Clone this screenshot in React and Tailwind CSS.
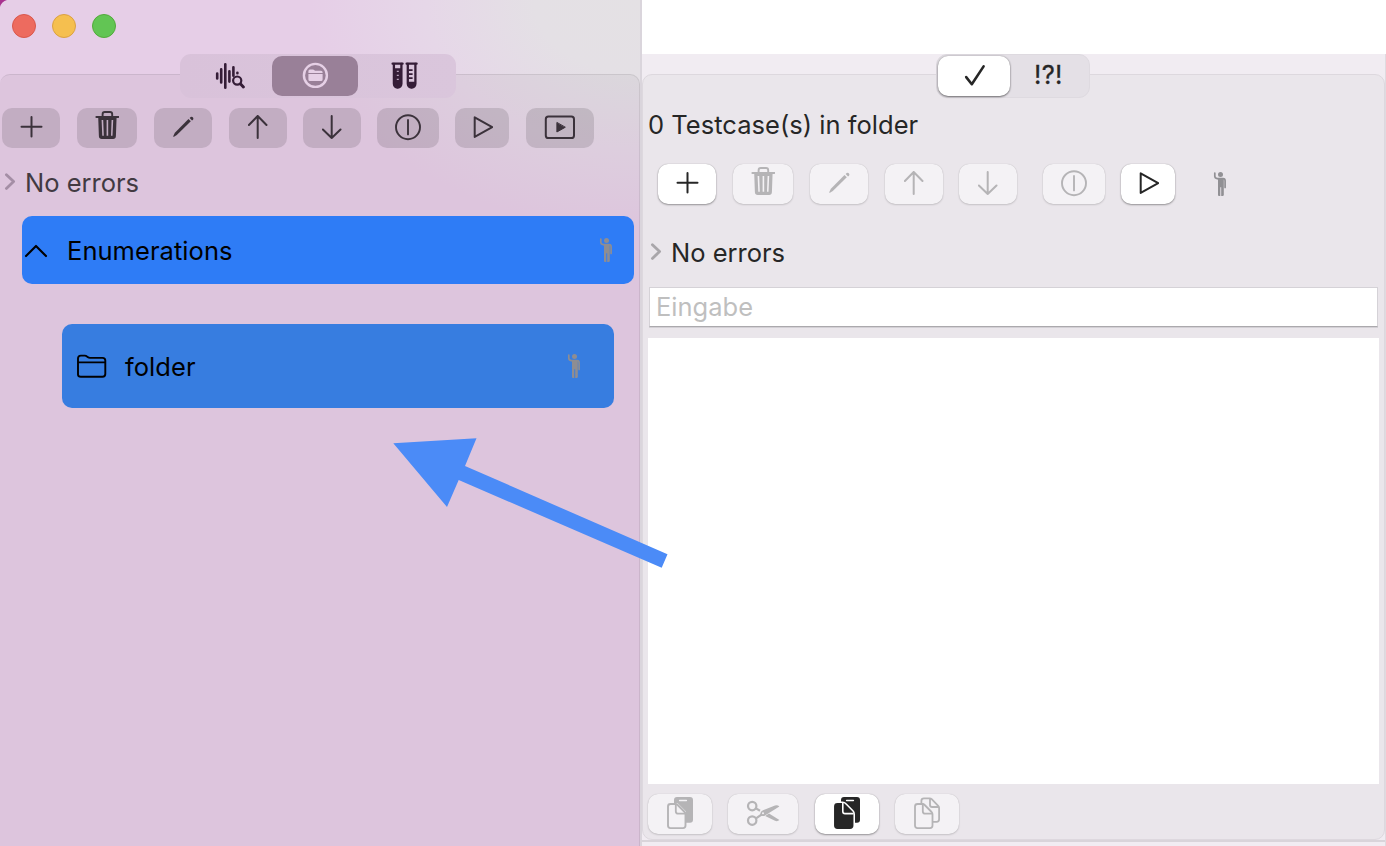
import React from "react";

const stroke = { fill: "none", stroke: "currentColor", strokeLinecap: "round", strokeLinejoin: "round" };

function Plus() {
  return (
    <svg width="24" height="40" viewBox="-0.5 0 24 40" {...stroke} strokeWidth="2">
      <path d="M2 18.7H22M12 8.9V28.5" />
    </svg>
  );
}

function Trash() {
  return (
    <svg width="24" height="40" viewBox="-0.4 0 24 40" fill="none">
      <path d="M7.2 8.5V6.2Q7.2 4 9.4 4H14.6Q16.8 4 16.8 6.2V8.5" stroke="currentColor" strokeWidth="1.9" />
      <path d="M1 8.9H23" stroke="currentColor" strokeWidth="2" strokeLinecap="round" />
      <path
        fill="currentColor"
        fillRule="evenodd"
        d="M2.8 9H21.2L20.5 28.3Q20.3 31 17.7 31H6.3Q3.7 31 3.5 28.3ZM6.2 12L6.9 27.8H8.4L7.8 12ZM11.2 12V27.8H12.8V12ZM16.2 12L15.6 27.8H17.1L17.8 12Z"
      />
    </svg>
  );
}

function Pencil() {
  return (
    <svg width="22" height="40" viewBox="-0.4 0 22 40" fill="currentColor">
      <path d="M16.1 11L18.4 13.3L4.4 27.1L1.6 28.8Q.5 29 .9 27.9L2.5 24.8Z" />
      <path d="M17.3 10.1L18.3 9.1Q19.5 8.3 20.6 9.4Q21.5 10.6 20.6 11.7L19.6 12.6Z" />
    </svg>
  );
}

function ArrowUp() {
  return (
    <svg width="20" height="40" viewBox="0.3 0 20 40" {...stroke} strokeWidth="2">
      <path d="M10 30V8M1.2 17L10 8L18.8 17" />
    </svg>
  );
}

function ArrowDown() {
  return (
    <svg width="20" height="40" viewBox="0.3 0 20 40" {...stroke} strokeWidth="2">
      <path d="M10 8V30M1.2 21.5L10 30L18.8 21.5" />
    </svg>
  );
}

function CircleBar() {
  return (
    <svg width="28" height="40" viewBox="0 0 28 40" {...stroke} strokeWidth="1.9">
      <circle cx="14" cy="19.2" r="12" />
      <path d="M14 12V26.4" />
    </svg>
  );
}

function Play() {
  return (
    <svg width="22" height="40" viewBox="-1 0 22 40" {...stroke} strokeWidth="2">
      <path d="M2.7 9.3V28.9L20.2 19.2Z" />
    </svg>
  );
}

function PlayRect() {
  return (
    <svg width="32" height="40" viewBox="0 0 32 40" {...stroke} strokeWidth="2">
      <rect x="1.8" y="8.6" width="28.2" height="21.4" rx="2.6" />
      <path d="M12.9 14.8V24L21 19.4Z" fill="currentColor" strokeWidth="1" />
    </svg>
  );
}

function Person({ className = "" }) {
  return (
    <svg width="14" height="26" viewBox="0 0 14 26" className={className}>
      <circle cx="7.5" cy="3.4" r="2.5" fill="currentColor" />
      <path d="M1.8 2V5.2Q1.9 7.3 4.3 7.6H10.2Q12.1 7.7 12.1 9.8V16.4" fill="none" stroke="currentColor" strokeWidth="1.7" strokeLinecap="round" />
      <path d="M4.5 6.9H10.8V24Q10.7 25 9.6 25H8.2V16.3H7.3V25H6Q5 25 5 24V9Z" fill="currentColor" />
    </svg>
  );
}

function Chevron({ className = "" }) {
  return (
    <svg width="12" height="18" viewBox="-0.4 0.4 12 18" {...stroke} strokeWidth="2.8" className={className}>
      <path d="M2 2.2L9.2 9L2 15.8" />
    </svg>
  );
}

function WaveSearch() {
  return (
    <svg width="30" height="30" viewBox="0 0.6 30 30" {...stroke} strokeWidth="2.2">
      <path d="M2.2 13.2V18M6.2 9V22M10.3 3.8V27.4M14.4 10.8V21.2M18.4 6.8V15.4M22.4 12.4V12.8" strokeWidth="2.6" />
      <circle cx="22.2" cy="20.2" r="4.1" />
      <path d="M25.6 23.6L28.4 26.6" strokeWidth="2.9" />
    </svg>
  );
}

function FolderCircle() {
  return (
    <svg width="28" height="28" viewBox="-0.4 0.6 28 28">
      <circle cx="14" cy="14" r="11.5" fill="none" stroke="#e6d0e6" strokeWidth="2.4" />
      <path d="M7 11.5V9.8Q7 8.2 8.6 8.2H11.5Q12.3 8.2 12.8 8.7L13.5 9.3H19.6Q21.2 9.3 21.2 10.8V11.5ZM7 12.5H21.2V18Q21.2 19.6 19.6 19.6H8.6Q7 19.6 7 18Z" fill="#e6d0e6" />
    </svg>
  );
}

function Tubes() {
  return (
    <svg width="28" height="28" viewBox="0.4 0.7 28 28">
      <g fill="none" stroke="currentColor" strokeLinecap="round">
        <path d="M2 2.4H12M16 2.4H26" strokeWidth="2.3" />
        <path d="M3.3 2.5V22.5Q3.5 26 7 26.2Q10.6 26 10.8 22.5V2.5M17.2 2.5V22.5Q17.4 26 21 26.2Q24.6 26 24.8 22.5V2.5" strokeWidth="2.3" />
      </g>
      <path d="M3 7H11V23Q10.6 26.7 7 27Q3.4 26.7 3 23ZM17 20.5H25V23Q24.6 26.7 21 27Q17.4 26.7 17 23Z" fill="currentColor" />
      <path d="M6.2 10H8.2M6.2 14H8.2M6.2 18H8.2" stroke="#dac3dc" strokeWidth="1" />
      <path d="M18 8.8H22M18 12.8H22M18 16.8H22" stroke="currentColor" strokeWidth="1.7" />
    </svg>
  );
}

function Folder() {
  return (
    <svg width="30" height="26" viewBox="0 -0.8 30 26" {...stroke} strokeWidth="1.9">
      <path d="M1 20.6V4.6Q1 1.8 3.8 1.8H7.8Q9 1.8 10 2.7L11 3.5Q11.7 4.1 13 4.1H25.5Q28.3 4.1 28.3 6.8V20.3Q28.3 23 25.5 23H3.8Q1 23 1 20.6ZM1 8.6H28.3" />
    </svg>
  );
}

const page = "M2 9.5Q2 7 4.5 7H9.6Q10.8 7 11.7 8L18.6 15Q19.5 16 19.5 17.2V28.6Q19.5 31.1 17 31.1H4.5Q2 31.1 2 28.6Z";
const backSheet = "M8 6V3Q8 0 11 0H24Q27 0 27 3V22.7Q27 25.7 24 25.7H20V14.5L11.5 6Z";

function PasteIcon({ solid = false }) {
  return (
    <svg width="28" height="34" viewBox="0 0 28 34">
      <path d={backSheet} fill="currentColor" />
      <path d="M13.6 3.4H20.4" stroke={solid ? "#fff" : "#f4f2f5"} strokeWidth="1.5" strokeLinecap="round" />
      {solid && <path d={page} fill="none" stroke="#fff" strokeWidth="5" />}
      <path d={page} fill={solid ? "currentColor" : "#f4f2f5"} stroke="currentColor" strokeWidth="1.9" />
      {solid ? (
        <path d="M9.8 6V14.4Q9.8 16.6 12 16.6H20.6" fill="none" stroke="#fff" strokeWidth="1.6" />
      ) : (
        <path d="M9.8 7V14.2Q9.8 16.7 12.3 16.7H19.5" fill="none" stroke="currentColor" strokeWidth="1.8" />
      )}
    </svg>
  );
}

function Scissors() {
  return (
    <svg width="34" height="28" viewBox="0 0.4 34 28">
      <g fill="none" stroke="currentColor" strokeWidth="2.2">
        <circle cx="6.2" cy="6.5" r="4.2" />
        <circle cx="6.2" cy="21" r="4.2" />
        <path d="M10 8.8L14 11.2M10 18.8L19 12.6" />
      </g>
      <path d="M14.2 14.6Q14.3 11.6 17 10.6L29 6Q31.5 5.2 33.4 6.9L19.8 15.3Q16 18 14.2 14.6Z" fill="currentColor" />
      <path d="M19.2 16.4L23 14L33.4 20.4Q31.5 22.2 29 21.2Z" fill="currentColor" />
      <circle cx="17" cy="13.6" r="1" fill="#f4f2f5" />
    </svg>
  );
}

function Docs() {
  return (
    <svg width="28" height="34" viewBox="0 0 28 34" {...stroke} strokeWidth="1.8">
      <path d={page} />
      <path d="M9.8 7.4V14.2Q9.8 16.7 12.3 16.7H19" />
      <path d="M8.4 6.4V3.8Q8.4 1.3 10.9 1.3H16.6Q17.8 1.3 18.7 2.2L25.2 8.8Q26.1 9.7 26.1 10.9V22.3Q26.1 24.8 23.6 24.8H20M17 1.8V8Q17 10 19.1 10H25.4" />
    </svg>
  );
}

function LeftButton({ className, children }) {
  return (
    <button className={`flex h-10 shrink-0 items-center justify-center rounded-[10px] bg-black/12 text-[#3b323b] ${className}`}>
      {children}
    </button>
  );
}

function RightButton({ className, active = false, children }) {
  const tone = active
    ? "bg-white text-[#262626] shadow-[0_1px_2px_rgba(0,0,0,0.35),0_0_1px_rgba(0,0,0,0.3)]"
    : "bg-[#f4f2f5] text-[#b5b4b6] shadow-[0_1px_2px_rgba(0,0,0,0.14),0_0_1px_rgba(0,0,0,0.2)]";
  return <button className={`flex h-10 shrink-0 items-center justify-center rounded-[10px] ${tone} ${className}`}>{children}</button>;
}

function Sidebar() {
  return (
    <aside className="flex w-[642px] shrink-0 flex-col border-r-2 border-[#dad5dc] bg-[#e6cee7] bg-[radial-gradient(ellipse_330px_230px_at_100%_0%,#e4e1e4_0%,#e4e0e5_32%,#e6d7e8_65%,#e6cee700_100%)]">
      <div className="flex h-[54px] items-start gap-4 pl-3 pt-3.5">
        <span className="size-6 rounded-full border border-[#d9574c] bg-[#ed6b5f]" />
        <span className="size-6 rounded-full border border-[#dba142] bg-[#f5bf4f]" />
        <span className="size-6 rounded-full border border-[#52aa3b] bg-[#62c554]" />
      </div>
      <div className="z-10 flex h-11 justify-center pr-1">
        <div className="flex w-[276px] items-center rounded-[11px] bg-linear-to-r from-[#d9c2da] to-[#dac6dc] text-[#351d37]">
          <div className="flex w-[92px] justify-center pl-2"><WaveSearch /></div>
          <div className="flex h-10 w-[86px] items-center justify-center rounded-[10px] bg-[#998098]"><FolderCircle /></div>
          <div className="flex w-[94px] justify-center"><Tubes /></div>
        </div>
      </div>
      <section className="-mt-6 flex grow flex-col rounded-t-[10px] border-t-[1.5px] border-r border-black/8 bg-black/4 pt-[33px]">
        <div className="flex pl-0.5">
          <LeftButton className="mr-[17px] w-[58px]"><Plus /></LeftButton>
          <LeftButton className="mr-[17px] w-[60px]"><Trash /></LeftButton>
          <LeftButton className="mr-[17px] w-[58px]"><Pencil /></LeftButton>
          <LeftButton className="mr-4 w-[58px]"><ArrowUp /></LeftButton>
          <LeftButton className="mr-4 w-[58px]"><ArrowDown /></LeftButton>
          <LeftButton className="mr-4 w-[62px]"><CircleBar /></LeftButton>
          <LeftButton className="mr-[17px] w-[54px]"><Play /></LeftButton>
          <LeftButton className="w-[68px]"><PlayRect /></LeftButton>
        </div>
        <div className="mt-[17px] flex h-9 items-center pl-1">
          <Chevron className="-mt-0.5 text-[#a48ea5]" />
          <span className="ml-[9px] text-[#423a42]">No errors</span>
        </div>
        <div className="mt-[15px] ml-[22px] flex h-[68px] w-[612px] items-center rounded-[10px] bg-[#2e7cf6] pr-[21px] text-black">
          <svg width="28" height="20" viewBox="0 -0.7 28 20" {...stroke} strokeWidth="2.1">
            <path d="M4 15.4L14 5.2L24 15.4" />
          </svg>
          <span className="ml-[17px] pt-0.5 tracking-[0.05px]">Enumerations</span>
          <Person className="ml-auto text-[#8e8d92]" />
        </div>
        <div className="mt-10 ml-[62px] flex h-[84px] w-[552px] items-center rounded-[10px] bg-[#377de0] pl-[15px] pr-[33px] text-black">
          <Folder />
          <span className="ml-[18px] pt-0.5 tracking-[0.05px]">folder</span>
          <Person className="ml-auto text-[#8e8d92]" />
        </div>
      </section>
    </aside>
  );
}

function Detail() {
  return (
    <main className="flex grow flex-col bg-[#f1ecf2]">
      <div className="h-[54px] shrink-0 bg-white" />
      <div className="flex grow flex-col border-r border-[#dfdbe0]">
        <div className="z-10 flex h-11 shrink-0 justify-center pr-px">
          <div className="flex w-[154px] items-center rounded-[11px] border border-[#dedae0] bg-[#e4e0e6] pl-px text-[#262626]">
            <div className="flex h-10 w-[72px] items-center justify-center rounded-[10px] bg-white shadow-[0_1px_2px_rgba(0,0,0,0.45),0_0_2px_rgba(0,0,0,0.3)]">
              <svg width="24" height="24" viewBox="-1 0.4 24 24" {...stroke} strokeWidth="2.6">
                <path d="M3.2 13.5L8.8 20.6L20.6 2.8" />
              </svg>
            </div>
            <span className="-mt-[3px] ml-6 text-[25.5px] tracking-[0.3px] [-webkit-text-stroke:0.3px_#262626]">!?!</span>
          </div>
        </div>
        <section className="-mt-6 flex h-[766px] shrink-0 flex-col rounded-[10px] border border-[#ddd8de] bg-[#eae6eb] px-[5px] pt-[32px] text-[#262626]">
          <h1 className="flex h-9 items-center tracking-[0.03px]">0 Testcase(s) in folder</h1>
          <div className="mt-[21px] flex items-center pl-2.5">
            <RightButton active className="mr-[17px] w-[58px]"><Plus /></RightButton>
            <RightButton className="mr-[17px] w-[60px]"><Trash /></RightButton>
            <RightButton className="mr-[17px] w-[58px]"><Pencil /></RightButton>
            <RightButton className="mr-4 w-[58px]"><ArrowUp /></RightButton>
            <RightButton className="mr-[26px] w-[58px]"><ArrowDown /></RightButton>
            <RightButton className="mr-4 w-[62px]"><CircleBar /></RightButton>
            <RightButton active className="mr-[38px] w-[54px]"><Play /></RightButton>
            <Person className="text-[#919094]" />
          </div>
          <div className="mt-[31px] flex h-9 items-center pl-0.5">
            <Chevron className="-mt-0.5 text-[#a9a6aa]" />
            <span className="ml-[9px]">No errors</span>
          </div>
          <input
            placeholder="Eingabe"
            className="mt-4 ml-px h-10 w-[729px] shrink-0 border border-[#d5d2d7] border-b-[#aba9ad] bg-white px-1.5 pb-0.5 shadow-[0_1px_0_#d3d0d5] placeholder:text-[#bfbfbf]"
          />
          <div className="mt-[11px] h-[446px] w-[731px] shrink-0 bg-white" />
          <div className="mt-2.5 flex">
            <RightButton className="mr-4 w-16"><PasteIcon /></RightButton>
            <RightButton className="mr-[17px] w-[70px]"><Scissors /></RightButton>
            <RightButton active className="mr-4 w-16"><PasteIcon solid /></RightButton>
            <RightButton className="w-16"><Docs /></RightButton>
          </div>
        </section>
        <div className="h-0.5 shrink-0 bg-[#d9d4da]" />
      </div>
    </main>
  );
}

export default function App() {
  return (
    <div className="relative flex h-[846px] w-[1386px] overflow-hidden bg-white font-['Inter',sans-serif] text-[25.5px] leading-9">
      <Sidebar />
      <Detail />
      <svg className="pointer-events-none absolute top-0 left-0 z-20" width="1386" height="846" viewBox="0 0 1386 846">
        <path d="M0 0H7Q1.5 1.5 0 7Z" fill="#a8328f" />
        <path d="M393.3 443.3L476.5 438.3L465 466L667.5 554.3L661.7 567.7L458.7 480L447 507Z" fill="#4b8bf7" />
      </svg>
    </div>
  );
}
